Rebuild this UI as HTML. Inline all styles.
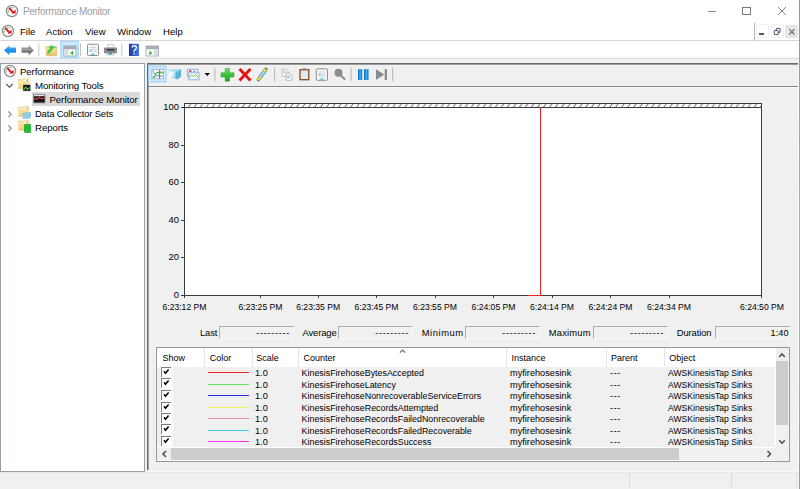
<!DOCTYPE html>
<html><head><meta charset="utf-8">
<style>
*{margin:0;padding:0;box-sizing:border-box}
html,body{width:800px;height:489px;overflow:hidden;background:#fff;font-family:"Liberation Sans",sans-serif;font-size:9px;color:#000}
.a{position:absolute}
.t{position:absolute;white-space:nowrap;line-height:10px}
svg{position:absolute;overflow:visible}
</style></head><body>

<!-- ===== title bar ===== -->
<svg width="0" height="0" style="position:absolute"><defs><symbol id="pm" viewBox="-7 -7 14 14">
 <circle cx="0" cy="0" r="5.6" fill="#fff" stroke="#8c8c8c" stroke-width="1.25"/>
 <path d="M-3.6 1.6 A3.9 3.9 0 0 1 1.8 -3.3" fill="none" stroke="#4a9a78" stroke-width="0.9" stroke-dasharray="1.6 0.5"/>
 <path d="M-2.8 -3.1 L1.6 1.9" stroke="#e41414" stroke-width="1.9"/>
 <path d="M3.6 -1.4 L3.6 2.5 L-0.4 2.5 Z" fill="#e41414"/>
</symbol></defs></svg>

<svg style="left:5px;top:3.5px" width="14" height="14"><use href="#pm"/></svg>
<div class="t" style="left:23px;top:7.2px;font-size:10px;letter-spacing:-0.33px;color:#a0a0a0">Performance Monitor</div>
<div class="a" style="left:707.5px;top:10.5px;width:8px;height:1px;background:#8a8a8a"></div>
<div class="a" style="left:742px;top:7px;width:8.5px;height:8px;border:1px solid #7a7a7a"></div>
<svg style="left:777px;top:6px" width="10" height="10"><path d="M1 1 L9 9 M9 1 L1 9" stroke="#7a7a7a" stroke-width="0.9"/></svg>

<!-- ===== menu bar ===== -->
<svg style="left:0.6px;top:24.3px" width="14" height="14"><use href="#pm"/></svg>
<div class="t" style="left:20px;top:27px;font-size:9.6px">File</div>
<div class="t" style="left:46px;top:27px;font-size:9.6px">Action</div>
<div class="t" style="left:85px;top:27px;font-size:9.6px">View</div>
<div class="t" style="left:117px;top:27px;font-size:9.6px">Window</div>
<div class="t" style="left:163px;top:27px;font-size:9.6px">Help</div>
<div class="a" style="left:0;top:40px;width:754px;height:1px;background:#d7d7d7"></div>
<div class="a" style="left:754px;top:23px;width:1px;height:18px;background:#b8b8b8"></div>
<div class="a" style="left:755px;top:40px;width:44px;height:1px;background:#d7d7d7"></div>
<div class="a" style="left:756px;top:24px;width:13px;height:14px;background:#fff;border:1px solid #f2f2f2;border-radius:1px"></div>
<div class="a" style="left:759px;top:33px;width:5px;height:1.5px;background:#4a5870"></div>
<div class="a" style="left:770.5px;top:24px;width:13px;height:14px;background:#fff;border:1px solid #f2f2f2;border-radius:1px"></div>
<svg style="left:770px;top:24px" width="13" height="14"><path d="M4.3 6.6 h3.8 v4 h-3.8 z M6.3 6.6 v-2.2 h3.8 v3.9 h-2" fill="none" stroke="#4a5870" stroke-width="1"/></svg>
<div class="a" style="left:785px;top:25px;width:13px;height:13px;background:#e6e6e6"></div>
<svg style="left:785px;top:25px" width="13" height="13"><path d="M4.2 4.2 L9.5 9.5 M9.5 4.2 L4.2 9.5" stroke="#5a6a80" stroke-width="1.1"/></svg>

<!-- ===== main toolbar ===== -->
<div class="a" style="left:0;top:57px;width:800px;height:432px;background:#f0f0f0"></div>
<div class="a" style="left:0;top:58px;width:799px;height:1px;background:#e4e4e4"></div>

<!-- main toolbar icons -->
<svg style="left:0;top:40px" width="170" height="18">
 <defs>
  <linearGradient id="gb" x1="0" y1="0" x2="0" y2="1"><stop offset="0" stop-color="#5cc0ff"/><stop offset="0.55" stop-color="#1a88e6"/><stop offset="1" stop-color="#4cb4fa"/></linearGradient>
  <linearGradient id="gg" x1="0" y1="0" x2="0" y2="1"><stop offset="0" stop-color="#8a8a8a"/><stop offset="0.45" stop-color="#9c9c9c"/><stop offset="0.6" stop-color="#727272"/><stop offset="1" stop-color="#8a8a8a"/></linearGradient>
  <linearGradient id="gf" x1="0" y1="0" x2="0" y2="1"><stop offset="0" stop-color="#fbe6a6"/><stop offset="1" stop-color="#e6c168"/></linearGradient>
  <linearGradient id="ghelp" x1="0" y1="0" x2="1" y2="0"><stop offset="0" stop-color="#1a3aa8"/><stop offset="1" stop-color="#4a78e6"/></linearGradient>
 </defs>
 <!-- back -->
 <path d="M4 10.3 L9.5 5.2 L9.5 7.5 L16 7.5 L16 12.8 L9.5 12.8 L9.5 15.5 Z" fill="url(#gb)"/>
 <!-- forward -->
 <path d="M34 10.3 L28.5 5.2 L28.5 7.5 L21.5 7.5 L21.5 12.8 L28.5 12.8 L28.5 15.5 Z" fill="url(#gg)"/>
 <rect x="38.3" y="3.3" width="1" height="13.2" fill="#c4c4c4"/>
 <!-- folder up -->
 <path d="M46.2 6.6 h10.5 v9.2 h-10.5 z" fill="url(#gf)" stroke="#d8b45c" stroke-width="0.6"/>
 <path d="M47.6 13.2 C48.2 10.8 49.2 9.2 50.3 8.3 L49.2 7.5 L51.3 5.2 L54.2 7.8 L52.6 8.5 C51.6 10.5 50.2 12.2 48.6 13.5 Z" fill="#3cd43c" stroke="#22a822" stroke-width="0.4"/>
 <circle cx="54.6" cy="7.3" r="0.9" fill="#6aa8e0"/>
 <!-- selected button -->
 <rect x="60.75" y="1.25" width="17.5" height="16.5" fill="#cce8ff" stroke="#99d1ff" stroke-width="1"/>
 <rect x="63.8" y="6" width="12.2" height="10" fill="#fff" stroke="#9aa2aa" stroke-width="0.8"/>
 <rect x="63.8" y="6" width="12.2" height="3.3" fill="#a6adb5"/>
 <rect x="64.3" y="9.3" width="4.2" height="6.3" fill="#d6dbe2"/>
 <path d="M70 13 L73 10.8 L73 15.2 Z" fill="#2fb52f"/>
 <rect x="80" y="3.3" width="1" height="13.2" fill="#c4c4c4"/>
 <!-- properties -->
 <rect x="87.5" y="4.2" width="11" height="11.3" rx="1" fill="#f6f6f8" stroke="#8e8e8e" stroke-width="1"/>
 <path d="M89.5 7.5 h7 M89.5 9.5 h7 M89.5 11.5 h7" stroke="#c8ccd4" stroke-width="0.8"/>
 <rect x="91.5" y="13.8" width="2.8" height="1.3" fill="#2cc0f0"/>
 <rect x="90" y="9.8" width="1.4" height="1.4" fill="#4ac8f0"/>
 <!-- printer -->
 <rect x="108" y="4.5" width="5.5" height="3.5" fill="#fff" stroke="#b8b8b8" stroke-width="0.7"/>
 <rect x="104" y="7.5" width="13" height="5.8" rx="0.8" fill="#8a8a8a"/>
 <rect x="106.8" y="9" width="7.6" height="1.6" fill="#3a3a3a"/>
 <rect x="106" y="13" width="9" height="2.5" fill="#c9d5e0"/>
 <rect x="109.8" y="12.5" width="1.6" height="2" fill="#1a7a5a"/>
 <rect x="108.4" y="12.5" width="1.3" height="2" fill="#4a9ef0"/>
 <rect x="121.3" y="3.3" width="1" height="13.2" fill="#c4c4c4"/>
 <!-- help -->
 <rect x="129" y="3.8" width="10" height="12.2" fill="url(#ghelp)"/>
 <path d="M131.8 7.6 Q132.2 5.6 134.2 5.6 Q136.4 5.7 136.4 7.6 Q136.3 9 134.8 10 Q134 10.6 134 12" fill="none" stroke="#fff" stroke-width="1.2"/><rect x="133.4" y="13" width="1.3" height="1.4" fill="#fff"/>
 <!-- show/hide action pane -->
 <rect x="146" y="6" width="12.5" height="10" fill="#fff" stroke="#9aa2aa" stroke-width="0.8"/>
 <rect x="146" y="6" width="12.5" height="3.3" fill="#a6adb5"/>
 <rect x="153.8" y="9.3" width="4.3" height="6.3" fill="#d6dbe2"/>
 <path d="M152.5 13 L149.3 10.8 L149.3 15.2 Z" fill="#2fb52f"/>
</svg>


<!-- ===== left tree panel ===== -->
<div class="a" style="left:0;top:63px;width:145px;height:409px;background:#fff;border:1px solid #9a9ea6"></div>
<div class="a" style="left:32px;top:92px;width:108px;height:14px;background:#d9d9d9"></div>
<svg style="left:0;top:63px" width="145" height="80">
 <defs><linearGradient id="gf2" x1="0" y1="0" x2="0" y2="1"><stop offset="0" stop-color="#fdeab0"/><stop offset="1" stop-color="#f0cf78"/></linearGradient></defs>
 <!-- chevron down -->
 <path d="M6.3 21 L9.5 24.3 L12.7 21" fill="none" stroke="#4a4a4a" stroke-width="1.1"/>
 <!-- folder monitoring tools -->
 <path d="M18.3 16.6 h4.6 l0.6 -0.6 h5.3 v9.8 h-10.5 z" fill="url(#gf2)" stroke="#e0c27a" stroke-width="0.6"/>
 <rect x="23.8" y="16.9" width="4.3" height="1.2" fill="#fff"/><rect x="26.2" y="16.9" width="1.6" height="1.2" fill="#8ab8e0"/>
 <path d="M18.6 18.6 h3.6 M18.6 18.6 v7" stroke="#fff3cc" stroke-width="0.7"/>
 <rect x="23" y="21.8" width="7.5" height="6.2" fill="#1a1018" stroke="#c8c8c8" stroke-width="0.4"/>
 <path d="M23.8 26.6 L25.6 24 L27.4 26.4 L29.8 24.6" fill="none" stroke="#3cc84a" stroke-width="1.2"/>
 <!-- perf monitor icon -->
 <rect x="33.5" y="31.3" width="11.5" height="8.6" fill="#141414" stroke="#8a8e96" stroke-width="0.8"/>
 <rect x="34" y="31.7" width="10.5" height="1.5" fill="#dde4ec"/>
 <path d="M34 37 L35.6 35.2 L37.2 36.3 L39.4 34.2 L41 35.6 L44.6 35.3" fill="none" stroke="#e04444" stroke-width="1.1"/>
 <!-- chevron right -->
 <path d="M8.3 48.5 L11.3 51.3 L8.3 54.2" fill="none" stroke="#8a8a8a" stroke-width="1.1"/>
 <path d="M18.3 44.2 h4.6 l0.6 -0.6 h5.3 v9.8 h-10.5 z" fill="url(#gf2)" stroke="#e0c27a" stroke-width="0.6"/>
 <rect x="23.8" y="44.5" width="4.3" height="1.2" fill="#fff"/><rect x="26.2" y="44.5" width="1.6" height="1.2" fill="#8ab8e0"/>
 <path d="M18.6 46.2 h3.6 M18.6 46.2 v7" stroke="#fff3cc" stroke-width="0.7"/>
 <path d="M22.2 50.2 L30.8 49 L30.6 55.2 L23 55.8 Z" fill="#74bde6"/>
 <path d="M23 52 L30 50.5 M23 54 L30 53" stroke="#c8e8f8" stroke-width="0.7"/>
 <path d="M8.3 62.5 L11.3 65.3 L8.3 68.2" fill="none" stroke="#8a8a8a" stroke-width="1.1"/>
 <path d="M18.3 58.0 h4.6 l0.6 -0.6 h5.3 v9.8 h-10.5 z" fill="url(#gf2)" stroke="#e0c27a" stroke-width="0.6"/>
 <rect x="23.8" y="58.3" width="4.3" height="1.2" fill="#fff"/><rect x="26.2" y="58.3" width="1.6" height="1.2" fill="#8ab8e0"/>
 <path d="M18.6 60.0 h3.6 M18.6 60.0 v7" stroke="#fff3cc" stroke-width="0.7"/>
 <rect x="24.5" y="61.5" width="6.2" height="8" rx="0.6" fill="#1fbf2f" stroke="#108a1a" stroke-width="0.6"/>
</svg>
<svg style="left:3px;top:64.2px" width="14" height="14"><use href="#pm"/></svg>
<div class="t" style="left:20px;top:66.5px;font-size:9.7px;letter-spacing:-0.12px;color:#000">Performance</div>
<div class="t" style="left:35px;top:80.5px;font-size:9.7px;letter-spacing:-0.12px;color:#000">Monitoring Tools</div>
<div class="t" style="left:49.5px;top:94.5px;font-size:9.7px;letter-spacing:-0.12px;color:#000">Performance Monitor</div>
<div class="t" style="left:35px;top:108.5px;font-size:9.4px;letter-spacing:-0.15px;color:#000">Data Collector Sets</div>
<div class="t" style="left:35px;top:122.5px;font-size:9.7px;letter-spacing:-0.12px;color:#000">Reports</div>


<!-- ===== right panel ===== -->
<div class="a" style="left:147px;top:63px;width:651px;height:407px;border-top:1px solid #686868;border-left:1px solid #686868"></div>
<div class="a" style="left:148px;top:64px;width:650px;height:1px;background:#9c9c9c"></div>
<div class="a" style="left:148px;top:64px;width:1px;height:406px;background:#a8a8a8"></div>
<div class="a" style="left:148px;top:86px;width:650px;height:1px;background:#858585"></div>
<div class="a" style="left:149px;top:87px;width:649px;height:1px;background:#f8f8f8"></div>


<!-- right panel toolbar -->
<svg style="left:146px;top:62px" width="260" height="26">
 <defs>
  <linearGradient id="gcube" x1="0" y1="0" x2="1" y2="0.3"><stop offset="0" stop-color="#d8f0fa"/><stop offset="0.35" stop-color="#f4fbfe"/><stop offset="1" stop-color="#5ab0d6"/></linearGradient>
  <linearGradient id="gplus" x1="0" y1="0" x2="0" y2="1"><stop offset="0" stop-color="#6ee06e"/><stop offset="1" stop-color="#16a516"/></linearGradient>
  <linearGradient id="gpause" x1="0" y1="0" x2="1" y2="0"><stop offset="0" stop-color="#0b5fb0"/><stop offset="0.5" stop-color="#3cb4f8"/><stop offset="1" stop-color="#0b6cc0"/></linearGradient>
 </defs>
 <rect x="2.5" y="4" width="17.5" height="16" fill="#cce8ff" stroke="#99d1ff" stroke-width="1"/>
 <rect x="5.8" y="7.5" width="11.7" height="9.2" fill="#fff" stroke="#a4b4d4" stroke-width="0.9"/>
 <path d="M6.5 11.5 h10.5 M6.5 14.5 h10.5" stroke="#d4e0f4" stroke-width="0.7"/>
 <path d="M6.6 8.2 Q8 12 10 13.4 L16.8 14.3" fill="none" stroke="#6a88d0" stroke-width="0.9"/>
 <path d="M6.3 15 L8.3 15.4 L10 11.6 L11.5 10.2 L13 11 L15 10 L17.2 11.3" fill="none" stroke="#3cb83c" stroke-width="1.1"/>
 <rect x="13" y="8" width="1.1" height="8.8" fill="#e8503c"/>
 <!-- cube -->
 <path d="M22.3 9.2 L24.5 7.2 L35 7.6 L34.8 14.8 L31.5 17.2 L23 15.8 Z" fill="url(#gcube)"/>
 <path d="M24.5 7.2 L35 7.6 L31.8 9.4 L22.3 9.2 Z" fill="#a8dcef"/>
 <path d="M29.5 9.4 L31.8 9.4 L35 7.6 L34.8 14.8 L31.5 17.2 L29.8 16.8 Z" fill="#5ab4d8"/>
 <!-- histogram/report -->
 <rect x="41.3" y="7.3" width="10.5" height="7" fill="#eef2f8" stroke="#90a8d0" stroke-width="0.9"/>
 <rect x="43" y="8.5" width="2.5" height="1.3" fill="#c01818"/>
 <rect x="47.5" y="9" width="1.6" height="1.3" fill="#5a88d8"/>
 <rect x="42.8" y="10.8" width="10.2" height="7" fill="#f6f8fb" stroke="#90a8d0" stroke-width="0.9"/>
 <path d="M43.5 16 L45.5 12.8 L47.5 14.5 L49.5 12.5 L52.5 15.5" fill="none" stroke="#6cc040" stroke-width="0.9"/>
 <path d="M58.5 11 L64 11 L61.25 14 Z" fill="#000"/>
 <rect x="68.3" y="5.8" width="1.2" height="13.5" fill="#bdbdbd"/>
 <!-- plus -->
 <path d="M79.2 6.5 h4.3 v4.3 h4.5 v4.2 h-4.5 v4.2 h-4.3 v-4.2 h-4.2 v-4.2 h4.2 z" fill="url(#gplus)" stroke="#1c9c1c" stroke-width="0.5"/>
 <!-- delete -->
 <path d="M94.5 8 L103.5 17.5 M103.5 8 L94.5 17.5" stroke="#e81010" stroke-width="2.9" stroke-linecap="square"/>
 <!-- pencil -->
 <path d="M112.5 17.5 L119.8 7.5" stroke="#2a6a8a" stroke-width="3.6" stroke-linecap="round"/>
 <path d="M112.5 17.5 L119.8 7.5" stroke="#a6d8ec" stroke-width="2.4"/>
 <path d="M112 18.3 L114.2 15.2" stroke="#e8d820" stroke-width="2.8"/>
 <path d="M118.3 9.3 L120 7" stroke="#e8d820" stroke-width="2.8"/>
 <rect x="128" y="5.8" width="1.2" height="13.5" fill="#bdbdbd"/>
 <!-- copy -->
 <path d="M136.2 7.2 h4 l2 2 v5.3 h-6 z" fill="#f4f8fc" stroke="#a8a8a8" stroke-width="0.7"/>
 <path d="M137 10 h3" stroke="#7ab0e0" stroke-width="0.8"/>
 <path d="M140 11 h4 l2 2 v5.3 h-6 z" fill="#f4f8fc" stroke="#a8a8a8" stroke-width="0.7"/>
 <path d="M141 14 h3 M141 15.5 h3" stroke="#7ab0e0" stroke-width="0.8"/>
 <!-- clipboard -->
 <rect x="154" y="7.7" width="8.8" height="10" fill="#dcebf6" stroke="#8a4a1e" stroke-width="1.3"/>
 <rect x="156.8" y="6.2" width="3.4" height="2.2" fill="#8a8a8a"/>
 <!-- properties -->
 <rect x="170.3" y="6.8" width="11.2" height="11.5" rx="1" fill="#f6f6f8" stroke="#8e8e8e" stroke-width="1"/>
 <path d="M172.5 10 h7 M172.5 12 h7 M172.5 14 h7" stroke="#c8ccd4" stroke-width="0.8"/>
 <rect x="174.5" y="16.3" width="2.8" height="1.3" fill="#2cc0f0"/>
 <rect x="173" y="12.3" width="1.4" height="1.4" fill="#4ac8f0"/>
 <!-- zoom -->
 <circle cx="192.5" cy="10.8" r="3.3" fill="#8c8c8c" stroke="#8c8c8c" stroke-width="1.4"/>
 <path d="M194.5 13 L198.5 17" stroke="#8c8c8c" stroke-width="2" stroke-linecap="round"/>
 <rect x="204.5" y="5.6" width="1.2" height="13.5" fill="#bdbdbd"/>
 <!-- pause -->
 <rect x="212" y="7.2" width="4.2" height="10.8" fill="url(#gpause)"/>
 <rect x="218" y="7.2" width="4.5" height="10.8" fill="url(#gpause)"/>
 <!-- next -->
 <path d="M230 7.2 L238.3 12.6 L230 18 Z" fill="#8c8c8c"/>
 <rect x="238.7" y="7.2" width="2.3" height="10.8" fill="#8c8c8c"/>
 <rect x="246" y="5.6" width="1.2" height="13.5" fill="#bdbdbd"/>
</svg>

<!-- plot -->
<div class="a" style="left:184px;top:103px;width:578px;height:193px;background:#fff;border:1px solid #3c3c3c"></div>
<svg style="left:185px;top:104px" width="576" height="3"><defs><pattern id="hp" x="2" y="0" width="6.022" height="3" patternUnits="userSpaceOnUse"><path d="M3.6 -0.2 L1.2 3.2" stroke="#707070" stroke-width="1"/></pattern></defs><rect width="576" height="3" fill="url(#hp)"/></svg>
<div class="a" style="left:185px;top:107px;width:576px;height:1px;background:#3c3c3c"></div>
<div class="a" style="left:540px;top:108px;width:1px;height:187px;background:#f02020"></div>
<div class="a" style="left:528px;top:295px;width:13px;height:1px;background:#f02020"></div>

<div class="a" style="left:181px;top:107px;width:3px;height:1px;background:#3c3c3c"></div>
<div class="t" style="left:120px;width:59px;text-align:right;top:102.4px;font-size:9.4px;color:#000">100</div>
<div class="a" style="left:181px;top:145px;width:3px;height:1px;background:#3c3c3c"></div>
<div class="t" style="left:120px;width:59px;text-align:right;top:140.4px;font-size:9.4px;color:#000">80</div>
<div class="a" style="left:181px;top:182px;width:3px;height:1px;background:#3c3c3c"></div>
<div class="t" style="left:120px;width:59px;text-align:right;top:177.4px;font-size:9.4px;color:#000">60</div>
<div class="a" style="left:181px;top:220px;width:3px;height:1px;background:#3c3c3c"></div>
<div class="t" style="left:120px;width:59px;text-align:right;top:215.4px;font-size:9.4px;color:#000">40</div>
<div class="a" style="left:181px;top:257px;width:3px;height:1px;background:#3c3c3c"></div>
<div class="t" style="left:120px;width:59px;text-align:right;top:252.4px;font-size:9.4px;color:#000">20</div>
<div class="a" style="left:181px;top:295px;width:3px;height:1px;background:#3c3c3c"></div>
<div class="t" style="left:120px;width:59px;text-align:right;top:290.4px;font-size:9.4px;color:#000">0</div>
<div class="a" style="left:184px;top:296px;width:1px;height:2px;background:#3c3c3c"></div>
<div class="a" style="left:260px;top:296px;width:1px;height:2px;background:#3c3c3c"></div>
<div class="a" style="left:318px;top:296px;width:1px;height:2px;background:#3c3c3c"></div>
<div class="a" style="left:376px;top:296px;width:1px;height:2px;background:#3c3c3c"></div>
<div class="a" style="left:435px;top:296px;width:1px;height:2px;background:#3c3c3c"></div>
<div class="a" style="left:493px;top:296px;width:1px;height:2px;background:#3c3c3c"></div>
<div class="a" style="left:552px;top:296px;width:1px;height:2px;background:#3c3c3c"></div>
<div class="a" style="left:610px;top:296px;width:1px;height:2px;background:#3c3c3c"></div>
<div class="a" style="left:669px;top:296px;width:1px;height:2px;background:#3c3c3c"></div>
<div class="a" style="left:761px;top:296px;width:1px;height:2px;background:#3c3c3c"></div>
<div class="t" style="left:162.5px;top:302px;font-size:8.6px;color:#000">6:23:12 PM</div>
<div class="t" style="left:238.5px;top:302px;font-size:8.6px;color:#000">6:23:25 PM</div>
<div class="t" style="left:296.2px;top:302px;font-size:8.6px;color:#000">6:23:35 PM</div>
<div class="t" style="left:354.5px;top:302px;font-size:8.6px;color:#000">6:23:45 PM</div>
<div class="t" style="left:413px;top:302px;font-size:8.6px;color:#000">6:23:55 PM</div>
<div class="t" style="left:471.5px;top:302px;font-size:8.6px;color:#000">6:24:05 PM</div>
<div class="t" style="left:530px;top:302px;font-size:8.6px;color:#000">6:24:14 PM</div>
<div class="t" style="left:588.5px;top:302px;font-size:8.6px;color:#000">6:24:24 PM</div>
<div class="t" style="left:647px;top:302px;font-size:8.6px;color:#000">6:24:34 PM</div>
<div class="t" style="left:740px;top:302px;font-size:8.6px;color:#000">6:24:50 PM</div>
<div class="t" style="left:200px;top:327.5px;font-size:9.4px;letter-spacing:-0.1px;color:#000">Last</div>
<div class="a" style="left:219px;top:326px;width:75px;height:13px;border-top:1px solid #acacac;border-left:1px solid #acacac;border-right:1px solid #f9f9f9;border-bottom:1px solid #f9f9f9"></div>
<div class="t" style="left:219px;width:71px;text-align:right;top:327.5px;font-size:9px;letter-spacing:0.75px;color:#000">---------</div>
<div class="t" style="left:302.5px;top:327.5px;font-size:9.4px;letter-spacing:-0.1px;color:#000">Average</div>
<div class="a" style="left:338px;top:326px;width:75px;height:13px;border-top:1px solid #acacac;border-left:1px solid #acacac;border-right:1px solid #f9f9f9;border-bottom:1px solid #f9f9f9"></div>
<div class="t" style="left:338px;width:71px;text-align:right;top:327.5px;font-size:9px;letter-spacing:0.75px;color:#000">---------</div>
<div class="t" style="left:421.75px;top:327.5px;font-size:9.4px;letter-spacing:0.55px;color:#000">Minimum</div>
<div class="a" style="left:465px;top:326px;width:75px;height:13px;border-top:1px solid #acacac;border-left:1px solid #acacac;border-right:1px solid #f9f9f9;border-bottom:1px solid #f9f9f9"></div>
<div class="t" style="left:465px;width:71px;text-align:right;top:327.5px;font-size:9px;letter-spacing:0.75px;color:#000">---------</div>
<div class="t" style="left:548.75px;top:327.5px;font-size:9.4px;letter-spacing:0.2px;color:#000">Maximum</div>
<div class="a" style="left:593px;top:326px;width:75px;height:13px;border-top:1px solid #acacac;border-left:1px solid #acacac;border-right:1px solid #f9f9f9;border-bottom:1px solid #f9f9f9"></div>
<div class="t" style="left:593px;width:71px;text-align:right;top:327.5px;font-size:9px;letter-spacing:0.75px;color:#000">---------</div>
<div class="t" style="left:676.8px;top:327.5px;font-size:9.4px;letter-spacing:-0.1px;color:#000">Duration</div>
<div class="a" style="left:715px;top:326px;width:75px;height:13px;border-top:1px solid #acacac;border-left:1px solid #acacac;border-right:1px solid #f9f9f9;border-bottom:1px solid #f9f9f9"></div>
<div class="t" style="left:715px;width:73.5px;text-align:right;top:327.5px;font-size:9.2px;color:#000">1:40</div>
<div class="a" style="left:156px;top:347px;width:634px;height:115px;border:1px solid #9498a0;background:#f0f0f0"></div>
<div class="a" style="left:157px;top:348px;width:619px;height:19px;background:#fff"></div>
<div class="a" style="left:204px;top:348px;width:1px;height:19px;background:#e5e5e5"></div>
<div class="a" style="left:252px;top:348px;width:1px;height:19px;background:#e5e5e5"></div>
<div class="a" style="left:298px;top:348px;width:1px;height:19px;background:#e5e5e5"></div>
<div class="a" style="left:506px;top:348px;width:1px;height:19px;background:#e5e5e5"></div>
<div class="a" style="left:606px;top:348px;width:1px;height:19px;background:#e5e5e5"></div>
<div class="a" style="left:664px;top:348px;width:1px;height:19px;background:#e5e5e5"></div>
<div class="t" style="left:162.5px;top:353px;font-size:9px;color:#000">Show</div>
<div class="t" style="left:209.7px;top:353px;font-size:9px;color:#000">Color</div>
<div class="t" style="left:256.2px;top:353px;font-size:9px;color:#000">Scale</div>
<div class="t" style="left:303.5px;top:353px;font-size:9px;color:#000">Counter</div>
<div class="t" style="left:511.5px;top:353px;font-size:9px;color:#000">Instance</div>
<div class="t" style="left:611px;top:353px;font-size:9px;color:#000">Parent</div>
<div class="t" style="left:669.25px;top:353px;font-size:9px;color:#000">Object</div>
<svg style="left:399px;top:347.5px" width="8" height="6"><path d="M1 4.6 L3.6 2 L6.2 4.6" fill="none" stroke="#6a6a6a" stroke-width="1.2"/></svg>
<div class="a" style="left:160px;top:367px;width:13px;height:80px;background:#f9f9f9"></div>
<div class="a" style="left:161px;top:367px;width:10px;height:10px;background:#fff;border-top:1.8px solid #7c7c7c;border-left:1.5px solid #7c7c7c"></div>
<svg style="left:161px;top:367px" width="10" height="10"><path d="M3 4.3 L4.5 6.2 L7.6 2.6" fill="none" stroke="#000" stroke-width="1.5"/></svg>
<div class="a" style="left:207.5px;top:372px;width:41px;height:1px;background:#f02828"></div>
<div class="t" style="left:255px;top:368.0px;font-size:9.2px;color:#000">1.0</div>
<div class="t" style="left:301.6px;top:368.0px;font-size:8.88px;color:#000">KinesisFirehoseBytesAccepted</div>
<div class="t" style="left:510px;top:368.0px;font-size:9.2px;color:#000">myfirehosesink</div>
<div class="t" style="left:610px;top:368.0px;font-size:9.2px;letter-spacing:0.6px;color:#000">---</div>
<div class="t" style="left:668px;top:368.0px;font-size:8.6px;color:#000">AWSKinesisTap Sinks</div>
<div class="a" style="left:161px;top:378px;width:10px;height:10px;background:#fff;border-top:1.8px solid #7c7c7c;border-left:1.5px solid #7c7c7c"></div>
<svg style="left:161px;top:378px" width="10" height="10"><path d="M3 4.3 L4.5 6.2 L7.6 2.6" fill="none" stroke="#000" stroke-width="1.5"/></svg>
<div class="a" style="left:207.5px;top:384px;width:41px;height:1px;background:#60e860"></div>
<div class="t" style="left:255px;top:379.5px;font-size:9.2px;color:#000">1.0</div>
<div class="t" style="left:301.6px;top:379.5px;font-size:8.88px;color:#000">KinesisFirehoseLatency</div>
<div class="t" style="left:510px;top:379.5px;font-size:9.2px;color:#000">myfirehosesink</div>
<div class="t" style="left:610px;top:379.5px;font-size:9.2px;letter-spacing:0.6px;color:#000">---</div>
<div class="t" style="left:668px;top:379.5px;font-size:8.6px;color:#000">AWSKinesisTap Sinks</div>
<div class="a" style="left:161px;top:390px;width:10px;height:10px;background:#fff;border-top:1.8px solid #7c7c7c;border-left:1.5px solid #7c7c7c"></div>
<svg style="left:161px;top:390px" width="10" height="10"><path d="M3 4.3 L4.5 6.2 L7.6 2.6" fill="none" stroke="#000" stroke-width="1.5"/></svg>
<div class="a" style="left:207.5px;top:395px;width:41px;height:1px;background:#2828e0"></div>
<div class="t" style="left:255px;top:391.0px;font-size:9.2px;color:#000">1.0</div>
<div class="t" style="left:301.6px;top:391.0px;font-size:8.88px;color:#000">KinesisFirehoseNonrecoverableServiceErrors</div>
<div class="t" style="left:510px;top:391.0px;font-size:9.2px;color:#000">myfirehosesink</div>
<div class="t" style="left:610px;top:391.0px;font-size:9.2px;letter-spacing:0.6px;color:#000">---</div>
<div class="t" style="left:668px;top:391.0px;font-size:8.6px;color:#000">AWSKinesisTap Sinks</div>
<div class="a" style="left:161px;top:402px;width:10px;height:10px;background:#fff;border-top:1.8px solid #7c7c7c;border-left:1.5px solid #7c7c7c"></div>
<svg style="left:161px;top:402px" width="10" height="10"><path d="M3 4.3 L4.5 6.2 L7.6 2.6" fill="none" stroke="#000" stroke-width="1.5"/></svg>
<div class="a" style="left:207.5px;top:407px;width:41px;height:1px;background:#f0f060"></div>
<div class="t" style="left:255px;top:402.5px;font-size:9.2px;color:#000">1.0</div>
<div class="t" style="left:301.6px;top:402.5px;font-size:8.88px;color:#000">KinesisFirehoseRecordsAttempted</div>
<div class="t" style="left:510px;top:402.5px;font-size:9.2px;color:#000">myfirehosesink</div>
<div class="t" style="left:610px;top:402.5px;font-size:9.2px;letter-spacing:0.6px;color:#000">---</div>
<div class="t" style="left:668px;top:402.5px;font-size:8.6px;color:#000">AWSKinesisTap Sinks</div>
<div class="a" style="left:161px;top:413px;width:10px;height:10px;background:#fff;border-top:1.8px solid #7c7c7c;border-left:1.5px solid #7c7c7c"></div>
<svg style="left:161px;top:413px" width="10" height="10"><path d="M3 4.3 L4.5 6.2 L7.6 2.6" fill="none" stroke="#000" stroke-width="1.5"/></svg>
<div class="a" style="left:207.5px;top:418px;width:41px;height:1px;background:#e08cb8"></div>
<div class="t" style="left:255px;top:414.0px;font-size:9.2px;color:#000">1.0</div>
<div class="t" style="left:301.6px;top:414.0px;font-size:8.88px;color:#000">KinesisFirehoseRecordsFailedNonrecoverable</div>
<div class="t" style="left:510px;top:414.0px;font-size:9.2px;color:#000">myfirehosesink</div>
<div class="t" style="left:610px;top:414.0px;font-size:9.2px;letter-spacing:0.6px;color:#000">---</div>
<div class="t" style="left:668px;top:414.0px;font-size:8.6px;color:#000">AWSKinesisTap Sinks</div>
<div class="a" style="left:161px;top:424px;width:10px;height:10px;background:#fff;border-top:1.8px solid #7c7c7c;border-left:1.5px solid #7c7c7c"></div>
<svg style="left:161px;top:424px" width="10" height="10"><path d="M3 4.3 L4.5 6.2 L7.6 2.6" fill="none" stroke="#000" stroke-width="1.5"/></svg>
<div class="a" style="left:207.5px;top:430px;width:41px;height:1px;background:#40c8f0"></div>
<div class="t" style="left:255px;top:425.5px;font-size:9.2px;color:#000">1.0</div>
<div class="t" style="left:301.6px;top:425.5px;font-size:8.88px;color:#000">KinesisFirehoseRecordsFailedRecoverable</div>
<div class="t" style="left:510px;top:425.5px;font-size:9.2px;color:#000">myfirehosesink</div>
<div class="t" style="left:610px;top:425.5px;font-size:9.2px;letter-spacing:0.6px;color:#000">---</div>
<div class="t" style="left:668px;top:425.5px;font-size:8.6px;color:#000">AWSKinesisTap Sinks</div>
<div class="a" style="left:161px;top:436px;width:10px;height:10px;background:#fff;border-top:1.8px solid #7c7c7c;border-left:1.5px solid #7c7c7c"></div>
<svg style="left:161px;top:436px" width="10" height="10"><path d="M3 4.3 L4.5 6.2 L7.6 2.6" fill="none" stroke="#000" stroke-width="1.5"/></svg>
<div class="a" style="left:207.5px;top:441px;width:41px;height:1px;background:#ff30ff"></div>
<div class="t" style="left:255px;top:437.0px;font-size:9.2px;color:#000">1.0</div>
<div class="t" style="left:301.6px;top:437.0px;font-size:8.88px;color:#000">KinesisFirehoseRecordsSuccess</div>
<div class="t" style="left:510px;top:437.0px;font-size:9.2px;color:#000">myfirehosesink</div>
<div class="t" style="left:610px;top:437.0px;font-size:9.2px;letter-spacing:0.6px;color:#000">---</div>
<div class="t" style="left:668px;top:437.0px;font-size:8.6px;color:#000">AWSKinesisTap Sinks</div>
<div class="a" style="left:775px;top:348px;width:14px;height:113px;background:#fff"></div>
<div class="a" style="left:776px;top:348px;width:13px;height:113px;background:#f0f0f0"></div>
<div class="a" style="left:776px;top:361px;width:12px;height:64px;background:#cdcdcd"></div>
<svg style="left:776px;top:348px" width="12" height="99"><path d="M3.2 9 L6 6 L8.8 9" fill="none" stroke="#505050" stroke-width="1.6"/><path d="M3.2 92.2 L6 95.2 L8.8 92.2" fill="none" stroke="#505050" stroke-width="1.6"/></svg>
<div class="a" style="left:157px;top:447px;width:619px;height:14px;background:#fff"></div>
<div class="a" style="left:157px;top:448px;width:619px;height:12px;background:#f0f0f0"></div>
<div class="a" style="left:171px;top:448px;width:508px;height:12px;background:#cdcdcd"></div>
<svg style="left:157px;top:448px" width="618" height="12"><path d="M9 3 L6 6 L9 9" fill="none" stroke="#505050" stroke-width="1.6"/><path d="M610.5 3 L613.5 6 L610.5 9" fill="none" stroke="#505050" stroke-width="1.6"/></svg>
<!-- status bar -->
<div class="a" style="left:146px;top:471px;width:653px;height:1px;background:#f8f8f8"></div><div class="a" style="left:0;top:472px;width:799px;height:1px;background:#e8e8e8"></div>
<div class="a" style="left:629px;top:473px;width:1px;height:15px;background:#dcdcdc"></div>
<div class="a" style="left:731px;top:473px;width:1px;height:15px;background:#dcdcdc"></div>
<div class="a" style="left:796px;top:473px;width:1px;height:15px;background:#e0e0e0"></div>
<div class="a" style="left:798px;top:65px;width:1px;height:405px;background:#fafafa"></div>
<div class="a" style="left:799px;top:0;width:1px;height:489px;background:linear-gradient(#8497b5 0,#8a9cb6 60px,#a6aeb8 200px,#a6aeb8 380px,#8d9cb0 489px)"></div>

</body></html>
